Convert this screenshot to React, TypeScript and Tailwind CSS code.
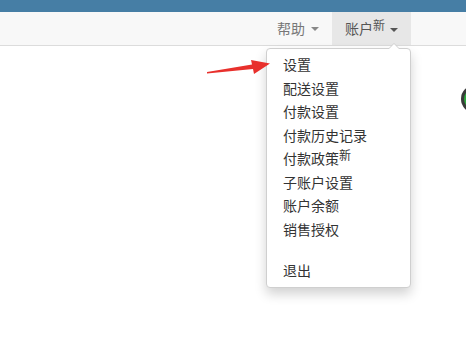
import React from "react";

const font = { fontFamily: '"Noto Sans CJK SC", "Noto Sans", sans-serif' };

function Caret({ className = "" }: { className?: string }) {
  return (
    <span
      className={`inline-block w-0 h-0 border-l-[4px] border-r-[4px] border-t-[4px] border-l-transparent border-r-transparent ${className}`}
    />
  );
}

export default function App() {
  const items = ["设置", "配送设置", "付款设置", "付款历史记录", "付款政策", "子账户设置", "账户余额", "销售授权"];
  return (
    <div className="relative w-[466px] h-[349px] overflow-hidden bg-white" style={font}>
      <div className="h-[12px] bg-[#467ea5]" />
      <div className="h-[34px] bg-[#f8f8f8] border-b border-[#dcdcdc] flex justify-end pr-[55px]">
        <div className="flex items-center gap-[6px] px-[13px] text-[14px] text-[#777]">
          <span>帮助</span>
          <Caret className="border-t-[#888]" />
        </div>
        <div className="flex items-center gap-[5px] pl-[13px] pr-[13px] bg-[#e7e7e7] text-[14px] text-[#555]">
          <span>
            账户<sup className="text-[12px] relative -top-[4px]">新</sup>
          </span>
          <Caret className="border-t-[#555] mt-[3px]" />
        </div>
      </div>

      {/* dropdown */}
      <div className="absolute left-[266px] top-[48px] w-[145px] rounded-[4px] border border-[#cfcfcf] bg-white py-[4px] shadow-[0_6px_12px_rgba(0,0,0,0.18)] text-[14px] text-[#333]">
        <span className="absolute -top-[6px] left-[121px] w-0 h-0 border-l-[6px] border-r-[6px] border-b-[6px] border-l-transparent border-r-transparent border-b-[#cfcfcf]" />
        <span className="absolute -top-[5px] left-[122px] w-0 h-0 border-l-[5px] border-r-[5px] border-b-[5px] border-l-transparent border-r-transparent border-b-white" />
        {items.map((t) => (
          <div key={t} className="px-[16px] leading-[23.5px] h-[23.5px]">
            {t === "付款政策" ? (
              <span>
                付款政策<sup className="text-[12px] relative -top-[4px]">新</sup>
              </span>
            ) : (
              t
            )}
          </div>
        ))}
        <div className="h-[18px]" />
        <div className="px-[16px] leading-[23.5px] h-[23.5px]">退出</div>
      </div>

      {/* red arrow */}
      <svg className="absolute left-[200px] top-[52px]" width="75" height="28" viewBox="0 0 75 28">
        <polygon points="7,20 52,12.5 51,8 70,11.5 54,22 53,17 7,21.5" fill="#e8302c" />
      </svg>

      {/* partial circle on right edge */}
      <div className="absolute left-[461px] top-[85px] w-[28px] h-[28px] rounded-full bg-[#3a3a3a] p-[3px]">
        <div className="w-full h-full rounded-full bg-[#2faa3f]" />
      </div>
    </div>
  );
}
